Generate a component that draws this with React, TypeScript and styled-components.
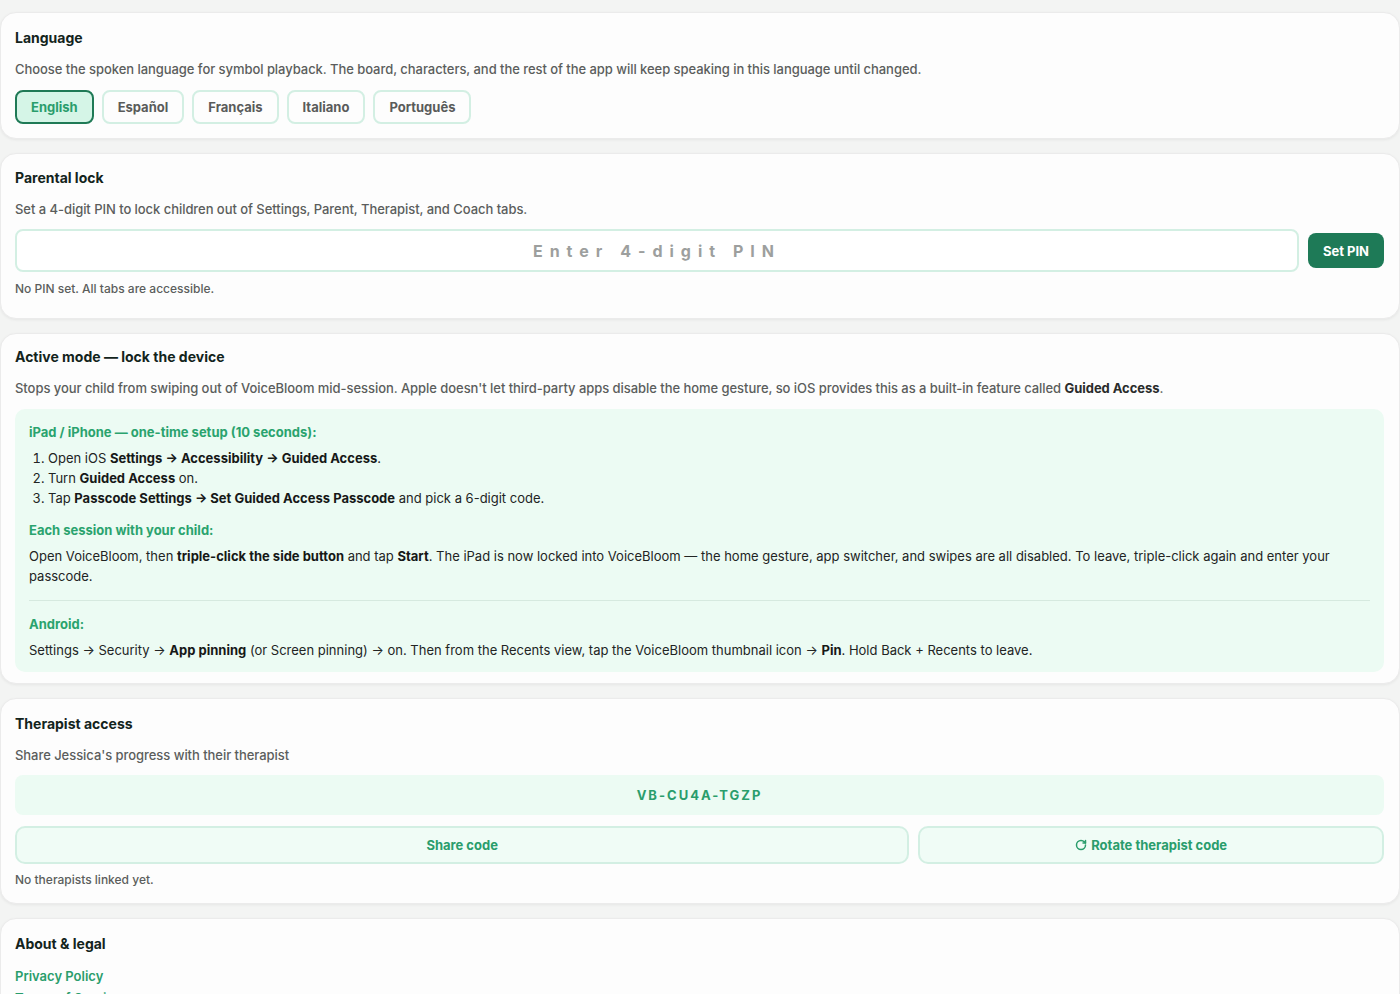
import React from "react";
import styled, { createGlobalStyle } from "styled-components";
import { RotateCw } from "lucide-react";

const Global = createGlobalStyle`
  html, body { margin: 0; padding: 0; background: #f3f4f3; }
  body { font-family: Inter, "Noto Sans", "Liberation Sans", sans-serif; -webkit-font-smoothing: antialiased; }
  * { box-sizing: border-box; }
`;

const Page = styled.div`
  display: flex;
  flex-direction: column;
  gap: 14px;
  padding-top: 12px;
  width: 1400px;
  height: 994px;
  overflow: hidden;
`;

const Card = styled.section<{ $pt?: number; $pb?: number }>`
  background: #fdfdfd;
  border: 1px solid #ebebeb;
  border-radius: 16px;
  box-shadow: 0 1px 3px rgba(0, 0, 0, 0.06);
  padding: ${(p) => p.$pt ?? 15}px 15px ${(p) => p.$pb ?? 16}px 14px;
  display: flex;
  flex-direction: column;
`;

const Title = styled.h2`
  margin: 0;
  font-size: 14px;
  line-height: 20px;
  font-weight: 700;
  color: #13241c;
`;

const Desc = styled.p<{ $mt?: number }>`
  margin: ${(p) => p.$mt ?? 11}px 0 0;
  font-size: 13px;
  line-height: 20px;
  font-weight: 500;
  color: #5b5d5c;
  letter-spacing: -0.05px;
  b { color: #2a2c2b; font-weight: 700; }
`;

const LangRow = styled.div`
  display: flex;
  gap: 8px;
  margin-top: 11px;
`;

const LangButton = styled.button<{ $active?: boolean }>`
  height: 34px;
  padding: 0 14px;
  border-radius: 8px;
  font-family: inherit;
  font-size: 13px;
  font-weight: 700;
  border: 2px solid ${(p) => (p.$active ? "#1f7a56" : "#d3efe3")};
  background: ${(p) => (p.$active ? "#d5f5e7" : "#fdfdfd")};
  color: ${(p) => (p.$active ? "#2a9d6c" : "#595b5a")};
`;

const PinRow = styled.div`
  display: flex;
  align-items: center;
  gap: 9px;
  margin-top: 10px;
`;

const PinInput = styled.input`
  flex: 1;
  height: 43px;
  border: 2px solid #d3efe3;
  border-radius: 8px;
  background: #fff;
  text-align: center;
  font-family: inherit;
  font-size: 16px;
  font-weight: 700;
  letter-spacing: 7px;
  outline: none;
  &::placeholder { color: #9d9f9e; }
`;

const PrimaryButton = styled.button`
  height: 35px;
  padding: 0 15px;
  border: none;
  border-radius: 8px;
  background: #1e7a57;
  color: #fff;
  font-family: inherit;
  font-size: 13px;
  font-weight: 700;
`;

const Note = styled.p<{ $mt?: number }>`
  margin: ${(p) => p.$mt ?? 9}px 0 0;
  font-size: 12px;
  line-height: 16px;
  font-weight: 500;
  color: #5b5d5c;
`;

const InfoBox = styled.div`
  margin-top: 11px;
  background: #ecfbf3;
  border-radius: 10px;
  padding: 13px 14px 12px;
  color: #222423;
  font-size: 13px;
  line-height: 20px;
  b { font-weight: 700; color: #161817; }
`;

const BoxHeading = styled.h3<{ $mt?: number }>`
  margin: ${(p) => p.$mt ?? 0}px 0 0;
  font-size: 13px;
  line-height: 20px;
  font-weight: 700;
  color: #2aa36e;
`;

const Steps = styled.ol`
  margin: 6px 0 0;
  padding: 0 0 0 19px;
  li::marker { color: #222423; }
`;

const BoxText = styled.p<{ $mt?: number }>`
  margin: ${(p) => p.$mt ?? 6}px 0 0;
`;

const Divider = styled.hr`
  border: none;
  border-top: 1px solid #d6e9df;
  margin: 14px 0 13px;
`;

const CodeBox = styled.div`
  margin-top: 10px;
  height: 40px;
  border-radius: 8px;
  background: #ecfbf3;
  display: flex;
  align-items: center;
  justify-content: center;
  font-size: 13px;
  font-weight: 700;
  letter-spacing: 2px;
  color: #2a9d6c;
`;

const ButtonGrid = styled.div`
  display: grid;
  grid-template-columns: 895fr 466fr;
  gap: 9px;
  margin-top: 11px;
`;

const SoftButton = styled.button`
  height: 38px;
  border: 2px solid #d3efe3;
  border-radius: 10px;
  background: #f0fcf6;
  color: #2a9d6c;
  font-family: inherit;
  font-size: 13px;
  font-weight: 700;
  display: flex;
  align-items: center;
  justify-content: center;
  gap: 4px;
`;

const LinkList = styled.div`
  display: flex;
  flex-direction: column;
  gap: 2px;
  margin-top: 12px;
`;

const LinkText = styled.a`
  font-size: 13px;
  line-height: 20px;
  font-weight: 600;
  color: #2a9d6c;
  text-decoration: none;
`;

const languages = ["English", "Español", "Français", "Italiano", "Português"];

export default function App() {
  return (
    <>
      <Global />
      <Page>
        <Card $pt={15} $pb={14}>
          <Title>Language</Title>
          <Desc>
            Choose the spoken language for symbol playback. The board, characters, and the rest of the app will keep
            speaking in this language until changed.
          </Desc>
          <LangRow>
            {languages.map((l, i) => (
              <LangButton key={l} $active={i === 0}>
                {l}
              </LangButton>
            ))}
          </LangRow>
        </Card>

        <Card $pt={14} $pb={21}>
          <Title>Parental lock</Title>
          <Desc>Set a 4-digit PIN to lock children out of Settings, Parent, Therapist, and Coach tabs.</Desc>
          <PinRow>
            <PinInput placeholder="Enter 4-digit PIN" />
            <PrimaryButton>Set PIN</PrimaryButton>
          </PinRow>
          <Note>No PIN set. All tabs are accessible.</Note>
        </Card>

        <Card $pt={13} $pb={11}>
          <Title>Active mode — lock the device</Title>
          <Desc>
            Stops your child from swiping out of VoiceBloom mid-session. Apple doesn't let third-party apps disable the
            home gesture, so iOS provides this as a built-in feature called <b>Guided Access</b>.
          </Desc>
          <InfoBox>
            <BoxHeading>iPad / iPhone — one-time setup (10 seconds):</BoxHeading>
            <Steps>
              <li>
                Open iOS <b>Settings → Accessibility → Guided Access</b>.
              </li>
              <li>
                Turn <b>Guided Access</b> on.
              </li>
              <li>
                Tap <b>Passcode Settings → Set Guided Access Passcode</b> and pick a 6-digit code.
              </li>
            </Steps>
            <BoxHeading $mt={12}>Each session with your child:</BoxHeading>
            <BoxText>
              Open VoiceBloom, then <b>triple-click the side button</b> and tap <b>Start</b>. The iPad is now locked into
              VoiceBloom — the home gesture, app switcher, and swipes are all disabled. To leave, triple-click again and
              enter your passcode.
            </BoxText>
            <Divider />
            <BoxHeading>Android:</BoxHeading>
            <BoxText>
              Settings → Security → <b>App pinning</b> (or Screen pinning) → on. Then from the Recents view, tap the
              VoiceBloom thumbnail icon → <b>Pin</b>. Hold Back + Recents to leave.
            </BoxText>
          </InfoBox>
        </Card>

        <Card $pt={15} $pb={15}>
          <Title>Therapist access</Title>
          <Desc $mt={11}>Share Jessica's progress with their therapist</Desc>
          <CodeBox>VB-CU4A-TGZP</CodeBox>
          <ButtonGrid>
            <SoftButton>Share code</SoftButton>
            <SoftButton>
              <RotateCw size={12} strokeWidth={3} />
              Rotate therapist code
            </SoftButton>
          </ButtonGrid>
          <Note $mt={8}>No therapists linked yet.</Note>
        </Card>

        <Card $pt={15} $pb={16}>
          <Title>About &amp; legal</Title>
          <LinkList>
            <LinkText href="#">Privacy Policy</LinkText>
            <LinkText href="#">Terms of Service</LinkText>
          </LinkList>
        </Card>
      </Page>
    </>
  );
}
